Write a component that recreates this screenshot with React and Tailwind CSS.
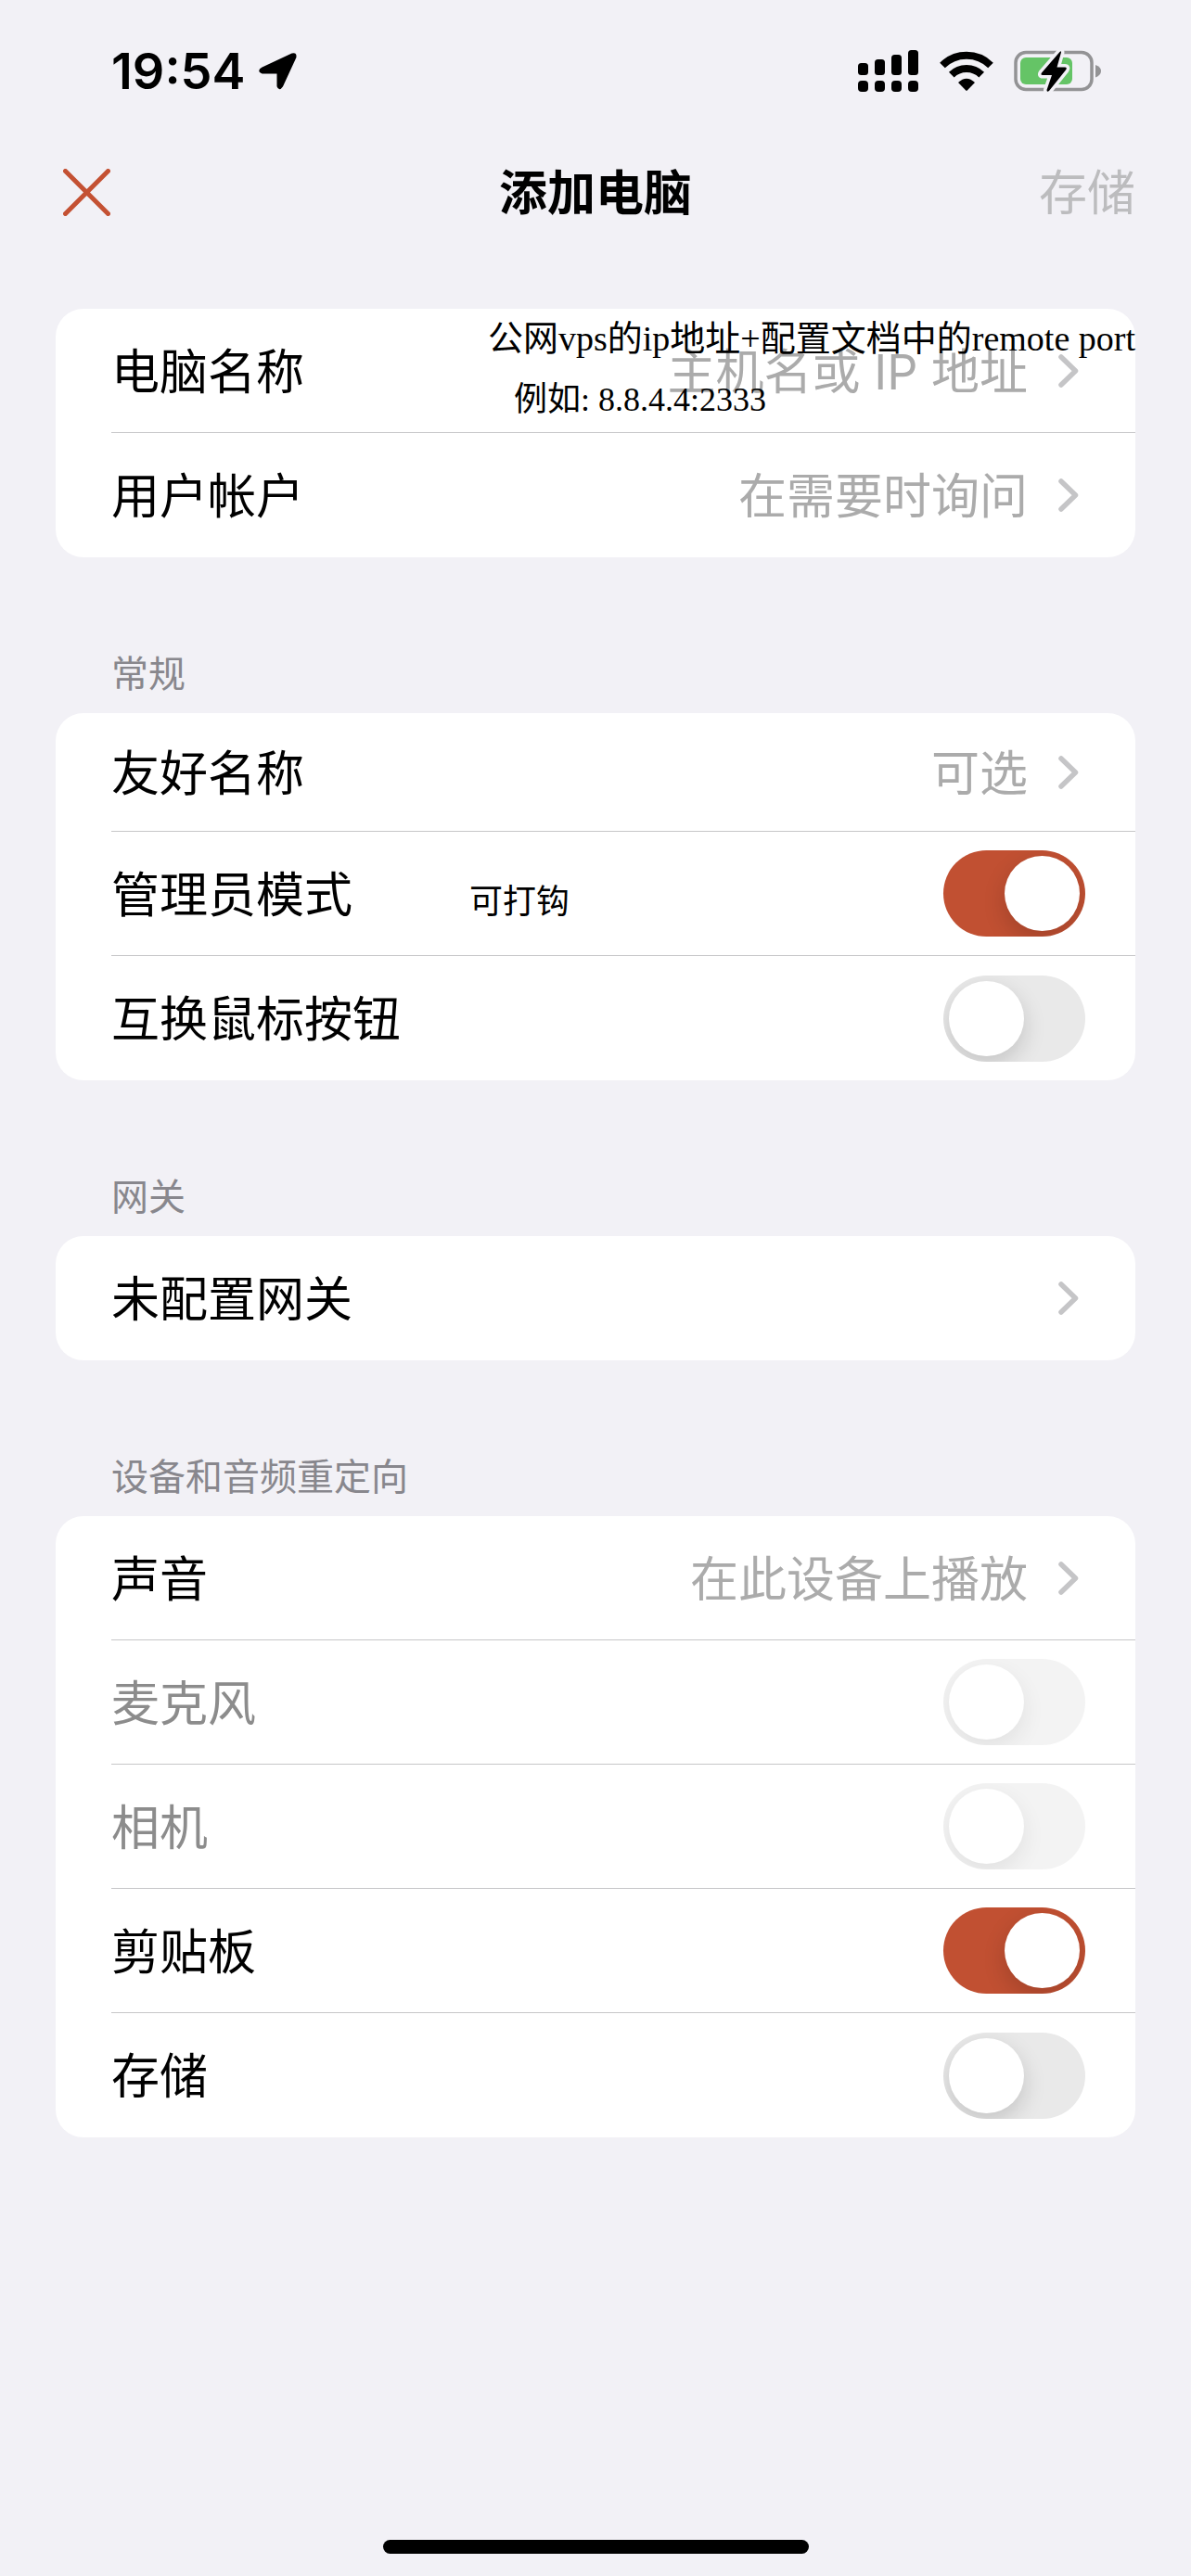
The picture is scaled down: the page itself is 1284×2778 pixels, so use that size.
import { useState } from 'react'

function StatusBar() {
  return (
    <div className="flex h-[154px] items-center justify-between pl-[120px] pr-[95px]">
      <div className="flex items-center gap-[14px]">
        <span className="text-[54px] leading-[60px] font-semibold">19:54</span>
        <svg width="42" height="42" viewBox="0 0 42 42">
          <path
            d="M4 17.5 36 2.5Q40 1 39.5 5.5L25 37Q22 41.5 20.500 37V22.500H4Q-1.500 20.500 4 17.500Z"
            stroke="#000" strokeWidth="2" strokeLinejoin="round"
          />
        </svg>
      </div>
      <div className="flex items-center gap-[22px]">
        <svg width="66" height="46" viewBox="0 0 66 46">
          <rect x="0" y="14" width="11" height="13" rx="3.500" />
          <rect x="18" y="10" width="11" height="17" rx="3.500" />
          <rect x="36" y="5" width="11" height="22" rx="3.500" />
          <rect x="54" y="0" width="11" height="27" rx="3.500" />
          <rect x="0" y="33" width="11" height="12" rx="4" />
          <rect x="18" y="33" width="11" height="12" rx="4" />
          <rect x="36" y="33" width="11" height="12" rx="4" />
          <rect x="54" y="33" width="11" height="12" rx="4" />
        </svg>
        <svg width="58" height="44" viewBox="0 0 58 44">
          <path d="M3 15.500A37 37 0 0 1 55 15.500" fill="none" stroke="#000" strokeWidth="8" />
          <path d="M12.800 25.600A23 23 0 0 1 45.200 25.600" fill="none" stroke="#000" strokeWidth="8" />
          <path d="M20 34Q29 25.500 38 34L30 42.300Q29 43.300 28 42.300Z" />
        </svg>
        <svg width="96" height="46" viewBox="0 0 96 46">
          <rect x="2" y="2.500" width="82" height="40" rx="11" fill="none" stroke="#939395" strokeWidth="3.500" />
          <rect x="7" y="8" width="56" height="29" rx="6" fill="#65c466" />
          <path d="M88 16Q94 18 94 22.500T88 29.500Z" fill="#939395" />
          <path
            d="M49.500 2 30 24.500Q28.500 27 31 27H41L35.500 43Q35.500 46 38 44L56 21.500Q58 18.500 55 18.500H46.500L51 2.500Q51 0.500 49.500 2Z"
            stroke="#f2f1f6" strokeWidth="7" paintOrder="stroke" strokeLinejoin="round"
          />
        </svg>
      </div>
    </div>
  )
}

function Chevron() {
  return (
    <svg width="22" height="36" viewBox="0 0 22 36" className="shrink-0">
      <path d="M3 3 18.500 18 3 33" fill="none" stroke="#c5c5c7" strokeWidth="5.500" strokeLinecap="round" strokeLinejoin="round" />
    </svg>
  )
}

function Section({ title, children }) {
  return (
    <section>
      {title && <h2 className="mt-24 px-[60px] pb-3 text-[40px] leading-[60px] text-[#88878d]">{title}</h2>}
      <div className="rounded-[30px] bg-white">{children}</div>
    </section>
  )
}

const rowClass = 'flex items-center justify-between border-[#c6c6c8] text-left text-[52px] leading-[76px]'

function LinkRow({ label, value, short, last, note }) {
  return (
    <div className="relative pl-[60px]">
      <button
        type="button"
        className={`${rowClass} w-full pr-[61px] ${short ? 'h-32' : 'h-[134px]'} ${last ? '' : 'border-b'}`}
      >
        <span className="pt-1">{label}</span>
        <span className="flex items-center gap-[33px]">
          <span className="pt-1 text-[#ababab]">{value}</span>
          <Chevron />
        </span>
      </button>
      {note}
    </div>
  )
}

function SwitchRow({ label, defaultOn = false, disabled, last, note }) {
  const [on, setOn] = useState(defaultOn)

  return (
    <div className="relative pl-[60px]">
      <label className={`${rowClass} h-[134px] pr-[54px] ${last ? '' : 'border-b'}`}>
        <span className={`pt-1 ${disabled ? 'text-[#8c8c8c]' : ''}`}>{label}</span>
        <input
          type="checkbox"
          role="switch"
          checked={on}
          disabled={disabled}
          onChange={e => setOn(e.target.checked)}
          className="h-[93px] w-[153px] appearance-none overflow-hidden rounded-full bg-[#e9e9e9] p-1.5 before:block before:size-[81px] before:rounded-full before:bg-white before:shadow-[0_9px_24px_rgba(0,0,0,0.16)] checked:bg-[#c15032] checked:before:ml-[60px] disabled:opacity-50"
        />
      </label>
      {note}
    </div>
  )
}

const noteClass = 'pointer-events-none absolute whitespace-nowrap font-["Liberation_Serif","Noto_Sans_CJK_SC",serif] leading-[48px]'

export default function App() {
  return (
    <div className="flex min-h-screen flex-col overflow-x-hidden bg-[#f2f1f6] font-[Inter,'Noto_Sans_CJK_SC',sans-serif] text-black">
      <StatusBar />

      <header className="grid h-[106px] grid-cols-3 items-center px-[60px] text-[52px] leading-[76px]">
        <button type="button" aria-label="关闭" className="justify-self-start p-2">
          <svg width="51" height="51" viewBox="0 0 51 51">
            <path d="M2.500 2.500 48.500 48.500M48.500 2.500 2.500 48.500" stroke="#c45133" strokeWidth="5" strokeLinecap="round" />
          </svg>
        </button>
        <h1 className="pt-1 text-center font-bold">添加电脑</h1>
        <button type="button" disabled className="justify-self-end pt-1 text-[#bcbcbe]">存储</button>
      </header>

      <main className="flex-1 px-[60px] pt-[73px]">
        <Section>
          <LinkRow
            label="电脑名称"
            value="主机名或 IP 地址"
            note={
              <>
                <p className={`${noteClass} top-2 left-[466px] text-[38px]`}>公网vps的ip地址+配置文档中的remote port</p>
                <p className={`${noteClass} top-[74px] left-[494px] text-[36px]`}>例如: 8.8.4.4:2333</p>
              </>
            }
          />
          <LinkRow label="用户帐户" value="在需要时询问" last />
        </Section>

        <Section title="常规">
          <LinkRow label="友好名称" value="可选" short />
          <SwitchRow
            label="管理员模式"
            defaultOn
            note={<p className={`${noteClass} top-[52px] left-[446px] text-[36px]`}>可打钩</p>}
          />
          <SwitchRow label="互换鼠标按钮" last />
        </Section>

        <Section title="网关">
          <LinkRow label="未配置网关" last />
        </Section>

        <Section title="设备和音频重定向">
          <LinkRow label="声音" value="在此设备上播放" />
          <SwitchRow label="麦克风" disabled />
          <SwitchRow label="相机" disabled />
          <SwitchRow label="剪贴板" defaultOn />
          <SwitchRow label="存储" last />
        </Section>
      </main>

      {/* Home indicator */}
      <div className="flex justify-center pb-6">
        <div className="h-[15px] w-[459px] rounded-full bg-black" />
      </div>
    </div>
  )
}
